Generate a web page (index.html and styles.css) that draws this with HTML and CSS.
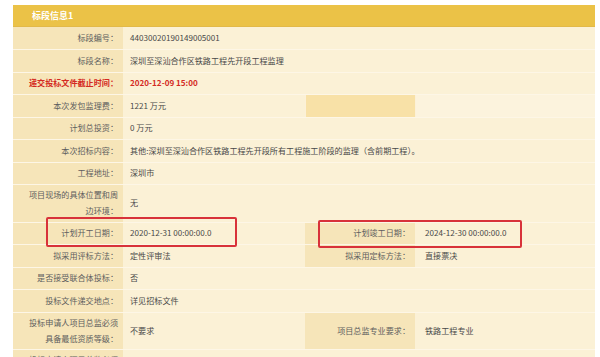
FILE: index.html
```html
<!DOCTYPE html>
<html lang="zh">
<head>
<meta charset="utf-8">
<link rel="stylesheet" href="styles.css">
</head>
<body>
<div class="panel">
  <div class="panel-head">标段信息1</div>
  <table class="info">
    <colgroup>
      <col class="c-label"><col class="c-value"><col class="c-label2"><col class="c-value2">
    </colgroup>
    <tr><td class="lbl">标段编号：</td><td class="val" colspan="3">44030020190149005001</td></tr>
    <tr><td class="lbl">标段名称：</td><td class="val" colspan="3">深圳至深汕合作区铁路工程先开段工程监理</td></tr>
    <tr><td class="lbl red">递交投标文件截止时间：</td><td class="val red" colspan="3">2020-12-09 15:00</td></tr>
    <tr><td class="lbl">本次发包监理费：</td><td class="val">1221 万元</td><td class="lbl empty"></td><td class="val light"></td></tr>
    <tr><td class="lbl">计划总投资：</td><td class="val" colspan="3">0 万元</td></tr>
    <tr><td class="lbl">本次招标内容：</td><td class="val" colspan="3">其他:深圳至深汕合作区铁路工程先开段所有工程施工阶段的监理（含前期工程）。</td></tr>
    <tr><td class="lbl">工程地址：</td><td class="val" colspan="3">深圳市</td></tr>
    <tr class="tall"><td class="lbl">项目现场的具体位置和周边环境：</td><td class="val" colspan="3">无</td></tr>
    <tr><td class="lbl">计划开工日期：</td><td class="val">2020-12-31 00:00:00.0</td><td class="lbl">计划竣工日期：</td><td class="val v2">2024-12-30 00:00:00.0</td></tr>
    <tr><td class="lbl">拟采用评标方法：</td><td class="val">定性评审法</td><td class="lbl">拟采用定标方法：</td><td class="val v2">直接票决</td></tr>
    <tr><td class="lbl">是否接受联合体投标：</td><td class="val" colspan="3">否</td></tr>
    <tr><td class="lbl">投标文件递交地点：</td><td class="val" colspan="3">详见招标文件</td></tr>
    <tr class="tall"><td class="lbl">投标申请人项目总监必须具备最低资质等级：</td><td class="val">不要求</td><td class="lbl">项目总监专业要求：</td><td class="val v2">铁路工程专业</td></tr>
    <tr class="tall"><td class="lbl">投标申请人项目总监必须具备最低职称等级：</td><td class="val" colspan="3">不要求</td></tr>
  </table>
  <div class="mark mark-start"></div>
  <div class="mark mark-end"></div>
</div>
</body>
</html>
```

FILE: styles.css
```css
html, body {
  margin: 0;
  padding: 0;
  background: #ffffff;
}
body {
  font-family: "Noto Sans CJK SC", "Liberation Sans", sans-serif;
  font-size: 8.1px;
  color: #4a4a4a;
  overflow: hidden;
}
.panel {
  position: relative;
  width: 582px;
  margin: 5px 0 0 13px;
  background: #fbf1d6;
}
.panel-head {
  height: 22px;
  line-height: 22px;
  padding-left: 19px;
  background: #ebc247;
  color: #ffffff;
  font-weight: bold;
  font-size: 9px;
  border-bottom: 1px solid #e2b948;
  box-sizing: border-box;
}
.info {
  width: 582px;
  table-layout: fixed;
  border-collapse: collapse;
}
.c-label { width: 110px; }
.c-value { width: 182px; }
.c-label2 { width: 110px; }
.c-value2 { width: 180px; }
.info tr { height: 22.5px; }
.info td {
  padding: 0;
  line-height: 16px;
  vertical-align: middle;
  border-bottom: 1px solid #fdf6e6;
}
.info tr.tall td {
  padding-top: 2.25px;
  padding-bottom: 2.25px;
}
.lbl {
  background: #f6e5b9;
  text-align: right;
  padding-left: 10px !important;
  padding-right: 5px !important;
  color: #5e5e5e;
}
.val {
  background: #fbf1d6;
  padding-left: 7px !important;
  color: #484848;
}
.val.v2 {
  padding-left: 10px !important;
}
.val.light {
  background: #fcf3dd;
}
.lbl.empty {
  background: #f8e1a7;
  border-left: 1px solid #fcf1d8;
  border-right: 1px solid #fcf1d8;
}
.red {
  color: #d42a22;
  font-weight: bold;
}
.mark {
  position: absolute;
  border: 2px solid #d8323a;
  border-radius: 2px;
  box-sizing: border-box;
}
.mark-start {
  left: 33px;
  top: 212px;
  width: 191px;
  height: 30px;
}
.mark-end {
  left: 305px;
  top: 215px;
  width: 204px;
  height: 28px;
}
```
